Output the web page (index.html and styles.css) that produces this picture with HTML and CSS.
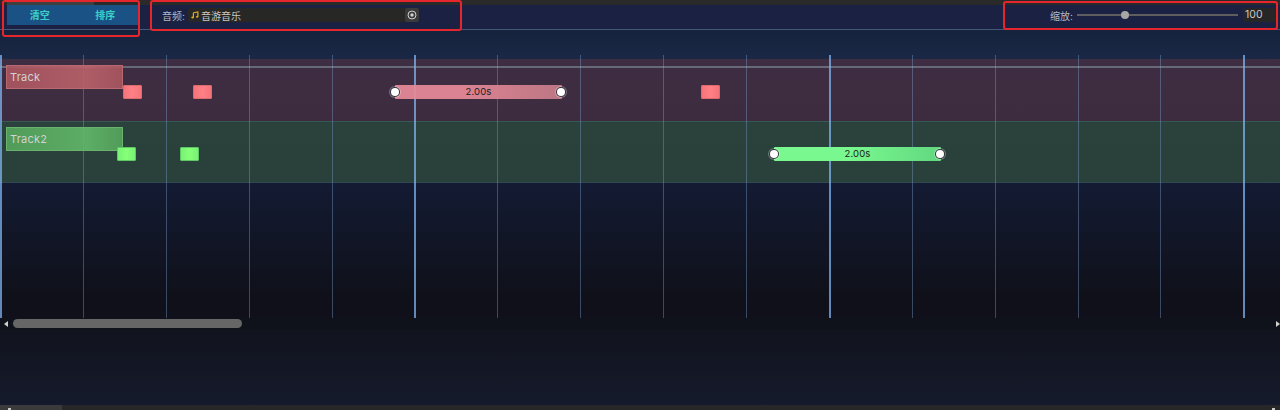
FILE: index.html
```html
<!DOCTYPE html>
<html lang="zh">
<head>
    <meta charset="UTF-8">
    <title>Track Editor</title>
    <link rel="stylesheet" href="styles.css">
</head>
<body>
    <div class="top-strip"><div class="top-tab"></div></div>

    <header class="toolbar">
        <div class="button-group">
            <button class="tool-button">清空</button>
            <button class="tool-button">排序</button>
        </div>
        <div class="audio-group">
            <span class="field-label">音频:</span>
            <div class="audio-field">
                <svg class="music-icon" viewBox="0 0 10 10">
                    <path d="M3 2.2 L8.6 1.2 V7.2 M3 2.2 V8.2" fill="none" stroke="#e0a92a" stroke-width="1.5"/>
                    <ellipse cx="2" cy="8.2" rx="1.6" ry="1.2" fill="#e0a92a"/>
                    <ellipse cx="7.6" cy="7.3" rx="1.6" ry="1.2" fill="#e0a92a"/>
                </svg>
                <span class="audio-name">音游音乐</span>
                <span class="audio-pick">
                    <svg viewBox="0 0 10 10" width="10" height="10">
                        <circle cx="5" cy="5" r="4" fill="none" stroke="#cfcfcf" stroke-width="1"/>
                        <circle cx="5" cy="5" r="1.7" fill="#cfcfcf"/>
                    </svg>
                </span>
            </div>
        </div>
        <div class="zoom-group">
            <span class="field-label">缩放:</span>
            <div class="slider"><div class="slider-thumb"></div></div>
            <span class="zoom-value">100</span>
        </div>
    </header>

    <main class="timeline">
        <div class="grid">
            <div class="grid-line major"></div>
            <div class="grid-line"></div>
            <div class="grid-line"></div>
            <div class="grid-line"></div>
            <div class="grid-line"></div>
            <div class="grid-line major"></div>
            <div class="grid-line"></div>
            <div class="grid-line"></div>
            <div class="grid-line"></div>
            <div class="grid-line"></div>
            <div class="grid-line major"></div>
            <div class="grid-line"></div>
            <div class="grid-line"></div>
            <div class="grid-line"></div>
            <div class="grid-line"></div>
            <div class="grid-line major"></div>
        </div>

        <div class="tracks">
            <section class="track track-red">
                <div class="track-label">Track</div>
                <div class="clip" style="left: 123px"></div>
                <div class="clip" style="left: 193px"></div>
                <div class="clip clip-long" style="left: 395px">
                    <span class="handle handle-left"></span>
                    2.00s
                    <span class="handle handle-right"></span>
                </div>
                <div class="clip" style="left: 701px"></div>
            </section>
            <section class="track track-green">
                <div class="track-label">Track2</div>
                <div class="clip" style="left: 117px"></div>
                <div class="clip" style="left: 180px"></div>
                <div class="clip clip-long" style="left: 774px">
                    <span class="handle handle-left"></span>
                    2.00s
                    <span class="handle handle-right"></span>
                </div>
            </section>
        </div>
        <div class="play-line"></div>
    </main>

    <div class="scrollbar">
        <span class="arrow arrow-left"></span>
        <div class="scroll-track"><div class="scroll-thumb"></div></div>
        <span class="arrow arrow-right"></span>
    </div>

    <div class="lower-area"></div>
    <div class="bottom-strip">
        <div class="bottom-tab"><span class="tab-glyph"></span></div>
        <span class="tab-glyph"></span>
    </div>

    <!-- red markers drawn on top of the screenshot -->
    <div class="marker marker-buttons"></div>
    <div class="marker marker-audio"></div>
    <div class="marker marker-zoom"></div>
</body>
</html>
```

FILE: styles.css
```css
* {
    box-sizing: border-box;
}

html, body {
    height: 100%;
}

body {
    margin: 0;
    width: 1280px;
    height: 410px;
    overflow: hidden;
    display: flex;
    flex-direction: column;
    position: relative;
    background-color: #11131d;
    color: #cfcfcf;
    font-family: Inter, "Noto Sans CJK SC", sans-serif;
}

.top-strip {
    height: 5px;
    background-color: #2a2a2a;
}

.top-tab {
    width: 87px;
    height: 5px;
    margin-left: 7px;
    background-color: #3f3f3f;
}

.toolbar {
    height: 25px;
    display: flex;
    background-color: #1a2142;
    border-bottom: 1px solid #44597a;
}

.button-group {
    display: flex;
    width: 131px;
    height: 20px;
    margin-left: 7px;
    background-color: #1a5285;
}

.tool-button {
    flex: 1;
    border: none;
    padding: 0 0 2px;
    background: none;
    color: #3dcfc5;
    font-family: inherit;
    font-size: 10px;
    font-weight: 700;
}

.audio-group {
    display: flex;
    align-items: center;
    height: 20px;
    margin-left: 24px;
    gap: 3px;
}

.field-label {
    font-size: 10px;
    color: #b5b8c2;
}

.audio-field {
    width: 231px;
    height: 14px;
    display: flex;
    align-items: center;
    background-color: #272726;
    border-radius: 2px;
}

.music-icon {
    width: 8px;
    height: 8px;
    margin-left: 3px;
}

.audio-name {
    flex: 1;
    margin-left: 2px;
    font-size: 10px;
    color: #c8c8c8;
}

.audio-pick {
    width: 14px;
    height: 14px;
    display: flex;
    align-items: center;
    justify-content: center;
    background-color: #3a3a3a;
    border-radius: 2px;
}

.zoom-group {
    display: flex;
    align-items: center;
    height: 20px;
    margin-left: auto;
    margin-right: 5px;
}

.slider {
    width: 161px;
    height: 2px;
    margin-left: 4px;
    position: relative;
    background-color: #5e5e5e;
}

.slider-thumb {
    position: absolute;
    left: 44px;
    top: -3px;
    width: 8px;
    height: 8px;
    border-radius: 50%;
    background-color: #a6a6a6;
}

.zoom-value {
    width: 32px;
    height: 14px;
    margin-left: 5px;
    padding-left: 2px;
    line-height: 14px;
    font-size: 10.5px;
    background-color: #262626;
    color: #c8c8c8;
}

.timeline {
    height: 288px;
    position: relative;
    background: linear-gradient(#15233d 0, #1a2846 30px, #131a31 160px, #0f1019 270px);
    overflow: hidden;
}

.grid {
    position: absolute;
    left: 0;
    right: 0;
    top: 25px;
    bottom: 0;
    display: flex;
    z-index: 1;
}

.grid-line {
    flex: 0 0 82.9px;
    border-left: 1px solid rgba(120, 155, 200, 0.42);
}

.grid-line.major {
    border-left: 2px solid rgba(130, 185, 245, 0.72);
}

.tracks {
    position: absolute;
    left: 0;
    right: 0;
    top: 29px;
}

.track {
    position: relative;
    height: 62px;
}

.track-red {
    background-color: rgba(78, 49, 66, 0.7);
}

.track-green {
    background-color: rgba(51, 80, 61, 0.7);
    border-top: 1px solid rgba(70, 110, 100, 0.5);
    border-bottom: 1px solid rgba(50, 80, 100, 0.6);
}

.track-label {
    position: absolute;
    left: 6px;
    top: 6px;
    width: 117px;
    height: 24px;
    padding-left: 3px;
    line-height: 23px;
    font-size: 11px;
    letter-spacing: 0.25px;
    color: #d2d2d2;
    z-index: 2;
}

.track-green .track-label {
    top: 5px;
    background: linear-gradient(90deg, rgba(85, 165, 92, 0.9), rgba(98, 185, 106, 0.9) 70%, rgba(85, 165, 92, 0.9));
    border: 1px solid #69b36f;
}

.track-red .track-label {
    background: linear-gradient(90deg, rgba(170, 86, 96, 0.9), rgba(186, 98, 106, 0.9) 70%, rgba(170, 86, 96, 0.9));
    border: 1px solid #b9686f;
}

.clip {
    position: absolute;
    top: 26px;
    width: 19px;
    height: 14px;
    border-radius: 1px;
    z-index: 2;
}

.track-green .clip {
    top: 25px;
    background: linear-gradient(90deg, #78f276, #86ff78 50%, #78f276);
    border: 1px solid #5fc763;
}

.track-red .clip {
    background: linear-gradient(90deg, #f4747a, #ff8085 50%, #f4747a);
    border: 1px solid #dd6a70;
}

.clip-long {
    width: 167px;
    text-align: center;
    font-size: 9.5px;
    letter-spacing: 0.1px;
    color: #1e1e1e;
}

.track-red .clip-long {
    background: linear-gradient(90deg, rgba(231, 138, 152, 0.92), rgba(232, 138, 152, 0.92) 40%, rgba(200, 125, 138, 0.92));
    border: none;
    line-height: 14px;
}

.track-green .clip-long {
    background: linear-gradient(90deg, #78f88e, #78f88e 45%, #62d880);
    border: none;
    line-height: 14px;
}

.handle {
    position: absolute;
    top: 3px;
    width: 8px;
    height: 8px;
    border-radius: 50%;
    background-color: #fff;
    box-shadow: 0 0 0 1px #33333f, 0 0 0 2px rgba(255, 255, 255, 0.3);
}

.handle-left {
    left: -4px;
}

.handle-right {
    right: -3px;
}

.play-line {
    position: absolute;
    left: 0;
    right: 0;
    top: 36px;
    height: 2px;
    background-color: rgba(150, 180, 185, 0.45);
    z-index: 1;
}

.scrollbar {
    height: 11px;
    display: flex;
    align-items: center;
    background-color: #10121b;
}

.arrow {
    width: 0;
    height: 0;
    border-top: 3px solid transparent;
    border-bottom: 3px solid transparent;
}

.arrow-left {
    margin-left: 4px;
    border-right: 4px solid #d0d0d0;
}

.arrow-right {
    border-left: 4px solid #d0d0d0;
}

.scroll-track {
    flex: 1;
    margin-left: 5px;
}

.scroll-thumb {
    width: 229px;
    height: 9px;
    border-radius: 5px;
    background-color: #666;
}

.lower-area {
    flex: 1;
    background: linear-gradient(#11131d, #151a2c);
}

.bottom-strip {
    height: 5px;
    display: flex;
    justify-content: space-between;
    padding-right: 5px;
    background-color: #272727;
    overflow: hidden;
}

.bottom-tab {
    width: 62px;
    height: 5px;
    padding-left: 8px;
    background-color: #3a3a3a;
}

.tab-glyph {
    display: block;
    width: 3px;
    height: 2px;
    margin-top: 3px;
    background-color: #c8c8c8;
}

.marker {
    position: absolute;
    border: 2px solid #e5262c;
    border-radius: 3px;
    z-index: 3;
}

.marker-buttons {
    left: 2px;
    top: 0;
    width: 138px;
    height: 37px;
}

.marker-audio {
    left: 150px;
    top: 0;
    width: 312px;
    height: 31px;
}

.marker-zoom {
    left: 1003px;
    top: 1px;
    width: 275px;
    height: 29px;
}
```
